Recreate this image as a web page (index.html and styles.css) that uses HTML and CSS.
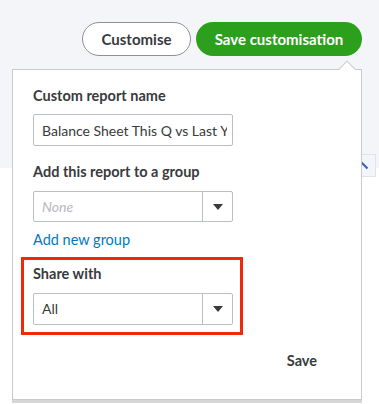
FILE: index.html
```html
<!DOCTYPE html>
<html>
<head>
<meta charset="utf-8">
<link rel="stylesheet" href="styles.css">
</head>
<body>
<div class="page">
  <div class="header">
    <div class="actions">
      <button class="btn btn-outline">Customise</button>
      <button class="btn btn-primary">Save customisation</button>
    </div>
    <div class="collapse-box">
      <svg width="14" height="9" viewBox="0 0 14 9"><path d="M1.5 7.5 L7 2 L12.5 7.5" fill="none" stroke="#3b63c4" stroke-width="2.2"/></svg>
    </div>
  </div>
  <div class="popover">
    <div class="caret"></div>
    <div class="field-label first">Custom report name</div>
    <input class="input" type="text" value="Balance Sheet This Q vs Last Year" readonly>
    <div class="field-label">Add this report to a group</div>
    <div class="select">
      <span class="select-value placeholder">None</span>
      <span class="select-btn"><span class="tri"></span></span>
    </div>
    <a class="link">Add new group</a>
    <div class="highlight">
      <div class="field-label">Share with</div>
      <div class="select share">
        <span class="select-value">All</span>
        <span class="select-btn"><span class="tri"></span></span>
      </div>
    </div>
    <div class="footer"><span class="save">Save</span></div>
  </div>
</div>
</body>
</html>
```
FILE: styles.css
```css
* { box-sizing: border-box; }
html, body { margin: 0; padding: 0; }
body {
  width: 379px;
  height: 404px;
  overflow: hidden;
  background: #fff;
  font-family: Lato, "Open Sans", sans-serif;
  color: #393a3d;
}
.page { position: relative; width: 379px; height: 404px; }
.header {
  position: relative;
  height: 168px;
  background: #f4f5f8;
  padding-top: 22px;
}
.actions {
  display: flex;
  justify-content: flex-end;
  gap: 5px;
  padding-right: 17px;
}
.btn {
  height: 34px;
  border-radius: 17px;
  font-family: Lato, sans-serif;
  font-weight: 700;
  font-size: 15px;
  padding: 0;
  cursor: pointer;
}
.btn-outline {
  width: 109px;
  background: #fff;
  border: 1px solid #8d9096;
  color: #393a3d;
}
.btn-primary {
  width: 166px;
  background: #2ca01c;
  border: none;
  color: #fff;
}
.collapse-box {
  position: absolute;
  left: 343px;
  top: 154px;
  width: 33px;
  height: 23px;
  border: 1px solid #dde4ee;
  background: #f4f5f8;
  display: flex;
  align-items: center;
  justify-content: center;
}
.collapse-box svg { margin-left: 5px; }
.popover {
  position: absolute;
  left: 12px;
  top: 69px;
  width: 350px;
  height: 331px;
  background: #fff;
  border: 1px solid #c9cacc;
  box-shadow: 0 3px 0 #d6d7d9;
  padding: 16px 0 0 20px;
}
.caret {
  position: absolute;
  right: 8px;
  top: -7px;
  width: 12px;
  height: 12px;
  background: #fff;
  border-left: 1px solid #c9cacc;
  border-top: 1px solid #c9cacc;
  transform: rotate(45deg);
}
.field-label {
  font-size: 14.5px;
  font-weight: 700;
  line-height: 20px;
  color: #393a3d;
  margin-top: 16px;
}
.field-label.first { margin-top: 0; }
.input {
  display: block;
  margin: 8px 0 0 0;
  width: 200px;
  height: 32px;
  border: 1px solid #babec5;
  border-radius: 2px;
  padding: 0 5px 0 8px;
  font-family: Lato, "Open Sans", sans-serif;
  font-size: 14px;
  color: #393a3d;
  background: #fff;
  outline: none;
}
.select {
  margin-top: 9px;
  width: 200px;
  height: 31px;
  border: 1px solid #babec5;
  border-radius: 2px;
  display: flex;
  align-items: stretch;
}
.select-value {
  flex: 1;
  padding-left: 8px;
  font-size: 14px;
  line-height: 29px;
  color: #393a3d;
}
.select-value.placeholder { color: #b7b9bd; font-style: italic; }
.select-btn {
  width: 30px;
  border-left: 1px solid #babec5;
  display: flex;
  align-items: center;
  justify-content: center;
}
.tri {
  width: 0;
  height: 0;
  border-left: 5px solid transparent;
  border-right: 5px solid transparent;
  border-top: 6px solid #393a3d;
}
.link {
  display: block;
  margin-top: 8px;
  font-size: 14.5px;
  line-height: 20px;
  color: #0077c5;
}
.highlight {
  margin-top: 7px;
  margin-left: -12px;
  width: 222px;
  border: 3px solid #ee2a0b;
  padding: 4px 7px 7px 9px;
}
.highlight .field-label { margin-top: 0; }
.select.share { height: 32px; }
.select.share .select-value { line-height: 30px; }
.footer {
  display: flex;
  justify-content: flex-end;
  padding-right: 44px;
  margin-top: 16px;
}
.save {
  font-size: 14.5px;
  font-weight: 700;
  line-height: 20px;
}
```
